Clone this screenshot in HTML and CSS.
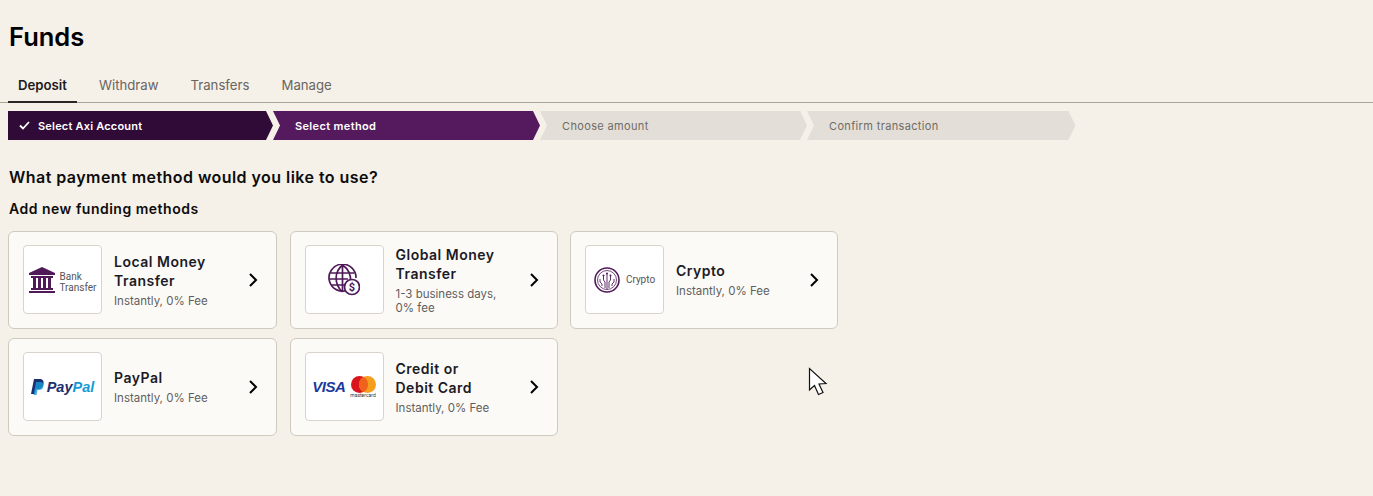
FILE: index.html
```html
<!DOCTYPE html>
<html>
<head>
    <title>Funds</title>
    <link rel="stylesheet" href="styles.css">
</head>
<body>
    <h1 class="page-title">Funds</h1>

    <div class="tabs">
        <div class="tab active">Deposit</div>
        <div class="tab">Withdraw</div>
        <div class="tab">Transfers</div>
        <div class="tab">Manage</div>
    </div>

    <div class="steps">
        <div class="step step-done">
            <svg class="step-check" width="11" height="9" viewBox="0 0 11 9"><path d="M1 4.5 L4 7.500 L10 1" fill="none" stroke="#fff" stroke-width="1.8"/></svg>
            Select Axi Account
        </div>
        <div class="step step-current">Select method</div>
        <div class="step">Choose amount</div>
        <div class="step">Confirm transaction</div>
    </div>

    <h2 class="question">What payment method would you like to use?</h2>
    <h3 class="subheading">Add new funding methods</h3>

    <div class="methods">
        <div class="card">
            <div class="logo">
                <svg width="26" height="26" viewBox="0 0 26 26" fill="#4f1a57">
                    <path d="M13 0 L26 6 L26 8 L0 8 L0 6 Z"/>
                    <rect x="2" y="9" width="22" height="2"/>
                    <rect x="4" y="11" width="3" height="10"/>
                    <rect x="9" y="11" width="3" height="10"/>
                    <rect x="14" y="11" width="3" height="10"/>
                    <rect x="19" y="11" width="3" height="10"/>
                    <rect x="2" y="21" width="22" height="2"/>
                    <rect x="0" y="24" width="26" height="2"/>
                </svg>
                <span class="logo-text logo-text-bank">Bank<br>Transfer</span>
            </div>
            <div class="card-text">
                <div class="card-title">Local Money<br>Transfer</div>
                <div class="card-sub">Instantly, 0% Fee</div>
            </div>
            <svg class="arrow" width="10" height="14" viewBox="0 0 10 14"><path d="M2 1 L8 7 L2 13" fill="none" stroke="#000" stroke-width="2"/></svg>
        </div>

        <div class="card">
            <div class="logo">
                <svg width="32" height="32" viewBox="0 0 32 32" fill="none" stroke="#4f1a57" stroke-width="1.7">
                    <path d="M20 26 A13.500 13.500 0 1 1 28 14"/>
                    <path d="M14.500 1 C6 8 6 20 14.500 28 M14.500 1 C22 6 23 12 22.500 18 M14.500 1 V28"/>
                    <path d="M2.500 9 H26 M1 15 H20 M3 21 H17"/>
                    <circle cx="24" cy="23" r="7.500" fill="#fff"/>
                    <text class="dollar" x="24" y="27" text-anchor="middle">$</text>
                </svg>
            </div>
            <div class="card-text">
                <div class="card-title">Global Money<br>Transfer</div>
                <div class="card-sub">1-3 business days,<br>0% fee</div>
            </div>
            <svg class="arrow" width="10" height="14" viewBox="0 0 10 14"><path d="M2 1 L8 7 L2 13" fill="none" stroke="#000" stroke-width="2"/></svg>
        </div>

        <div class="card">
            <div class="logo">
                <svg width="26" height="26" viewBox="0 0 26 26" fill="none" stroke="#4f1a57">
                    <circle cx="13" cy="13" r="12" stroke-width="1.6"/>
                    <circle cx="13" cy="13" r="9.500" stroke-width="0.8"/>
                    <path d="M13 7 V22 M9.500 9 V13 L11 15 V21 M16.500 9 V13 L15 15 V21 M6 12 V15 L8 17 V19 M20 12 V15 L18 17 V19" stroke-width="0.9"/>
                    <circle cx="13" cy="6.500" r="1" fill="#4f1a57" stroke="none"/>
                    <circle cx="9.500" cy="8.500" r="1" fill="#4f1a57" stroke="none"/>
                    <circle cx="16.500" cy="8.500" r="1" fill="#4f1a57" stroke="none"/>
                </svg>
                <span class="logo-text logo-text-crypto">Crypto</span>
            </div>
            <div class="card-text">
                <div class="card-title">Crypto</div>
                <div class="card-sub">Instantly, 0% Fee</div>
            </div>
            <svg class="arrow" width="10" height="14" viewBox="0 0 10 14"><path d="M2 1 L8 7 L2 13" fill="none" stroke="#000" stroke-width="2"/></svg>
        </div>

        <div class="card">
            <div class="logo">
                <svg width="13" height="16" viewBox="0 0 13 16">
                    <path d="M3 0 H8 C12 0 13 2 12.500 5 C12 8 10 10 7 10 H5 L4 15 H0 Z" fill="#1b2f6e"/>
                    <path d="M5 3 H9 C12 3 13 5 12.500 7 C12 10 10 11 8 11 H6.500 L5.500 16 H2.500 Z" fill="#179bd7" opacity="0.8"/>
                </svg>
                <span class="paypal"><span class="pay">Pay</span><span class="pal">Pal</span></span>
            </div>
            <div class="card-text">
                <div class="card-title">PayPal</div>
                <div class="card-sub">Instantly, 0% Fee</div>
            </div>
            <svg class="arrow" width="10" height="14" viewBox="0 0 10 14"><path d="M2 1 L8 7 L2 13" fill="none" stroke="#000" stroke-width="2"/></svg>
        </div>

        <div class="card">
            <div class="logo">
                <span class="visa">VISA</span>
                <div class="mastercard">
                    <svg width="25" height="17" viewBox="0 0 25 17">
                        <circle cx="8.500" cy="8.500" r="8.500" fill="#d9141c"/>
                        <circle cx="16.500" cy="8.500" r="8.500" fill="#f59e1e"/>
                        <path d="M12.500 1 A8.500 8.500 0 0 1 12.500 16 A8.500 8.500 0 0 1 12.500 1 Z" fill="#f0621b"/>
                    </svg>
                    <span class="mc-text">mastercard</span>
                </div>
            </div>
            <div class="card-text">
                <div class="card-title">Credit or<br>Debit Card</div>
                <div class="card-sub">Instantly, 0% Fee</div>
            </div>
            <svg class="arrow" width="10" height="14" viewBox="0 0 10 14"><path d="M2 1 L8 7 L2 13" fill="none" stroke="#000" stroke-width="2"/></svg>
        </div>
    </div>

    <svg class="cursor" width="20" height="30" viewBox="0 0 20 30">
        <path d="M1.500 1.500 L1.500 23 L6.500 18.500 L10.500 27.500 L15 25.500 L11 17 L18 16.500 Z" fill="#fff" stroke="#111" stroke-width="1.200"/>
    </svg>
</body>
</html>
```

FILE: styles.css
```css
body {
    font-family: Inter, Lato, sans-serif;
    margin: 0;
    padding: 0 0 0 8px;
    background-color: #f5f0e8;
    color: #111;
    overflow: hidden;
}
.page-title {
    font-size: 25.5px;
    font-weight: 600;
    line-height: 32px;
    margin: 21px 0 0 1px;
    color: #000;
}
.tabs {
    display: flex;
    gap: 12px;
    height: 49px;
    border-bottom: 1px solid #a8a398;
    align-items: flex-end;
    margin-left: -8px;
    padding-left: 8px;
}
.tab {
    box-sizing: border-box;
    height: 32px;
    padding: 0 10px;
    line-height: 28px;
    font-size: 13.2px;
    color: #69655f;
    border-bottom: 2px solid transparent;
    margin-bottom: -1px;
}
.tab.active {
    color: #1d1a1c;
    font-weight: 600;
    font-size: 13.2px;
    border-bottom-color: #2b2526;
}
.steps {
    display: flex;
    margin-top: 8px;
}
.step {
    display: flex;
    align-items: center;
    box-sizing: border-box;
    width: 267px;
    height: 29px;
    padding-left: 22px;
    font-size: 11px;
    letter-spacing: 0.35px;
    color: #6f6b66;
    background-color: #e3dfd8;
    clip-path: polygon(0 0, calc(100% - 7px) 0, 100% 50%, calc(100% - 7px) 100%, 0 100%, 7px 50%);
}
.step:last-child {
    width: 268.5px;
}
.step-done {
    width: 265px;
    padding-left: 11px;
    color: #fff;
    font-weight: 600;
    letter-spacing: 0.2px;
    background-color: #300b38;
    clip-path: polygon(0 0, calc(100% - 7px) 0, 100% 50%, calc(100% - 7px) 100%, 0 100%);
}
.step-current {
    color: #fff;
    font-weight: 600;
    background-color: #551a5e;
}
.step-check {
    margin-right: 8px;
}
.question {
    font-size: 16px;
    font-weight: 600;
    line-height: 22px;
    letter-spacing: 0.45px;
    margin: 26px 0 0 1px;
    color: #0c0c0c;
}
.subheading {
    font-size: 14px;
    font-weight: 600;
    line-height: 20px;
    letter-spacing: 0.5px;
    margin: 11px 0 0 1px;
    color: #0c0c0c;
}
.methods {
    display: grid;
    grid-template-columns: 269px 268px 268px;
    grid-auto-rows: 97.5px;
    column-gap: 12.5px;
    row-gap: 9.5px;
    margin-top: 12px;
}
.card {
    display: flex;
    align-items: center;
    box-sizing: border-box;
    padding: 0 14px;
    background-color: #fcfaf6;
    border: 1px solid #cfcabf;
    border-radius: 6px;
}
.logo {
    display: flex;
    align-items: center;
    justify-content: center;
    gap: 5px;
    flex: none;
    box-sizing: border-box;
    width: 79px;
    height: 69px;
    background-color: #fff;
    border: 1px solid #d8d4cc;
    border-radius: 4px;
}
.logo-text {
    font-family: Roboto, sans-serif;
    font-size: 10px;
    line-height: 11px;
    color: #555;
}
.logo-text-bank {
    margin-top: 4px;
}
.logo-text-crypto {
    margin-left: 1px;
}
.dollar {
    font-family: Roboto, sans-serif;
    font-size: 11px;
    font-weight: 700;
    fill: #4f1a57;
    stroke: none;
}
.paypal {
    font-family: "Liberation Sans", sans-serif;
    font-size: 14.5px;
    font-weight: 700;
    font-style: italic;
    margin-left: -2px;
}
.pay {
    color: #1b2f6e;
}
.pal {
    color: #179bd7;
}
.visa {
    font-family: "Liberation Sans", sans-serif;
    font-size: 15px;
    font-weight: 700;
    font-style: italic;
    color: #1a3a9c;
    letter-spacing: -0.5px;
}
.mastercard {
    display: flex;
    flex-direction: column;
    align-items: center;
}
.mc-text {
    font-family: Roboto, sans-serif;
    font-size: 5px;
    line-height: 5px;
    color: #333;
}
.card-text {
    flex: 1;
    margin-left: 12px;
    min-width: 0;
}
.card-title {
    font-size: 14px;
    font-weight: 600;
    line-height: 19px;
    letter-spacing: 0.5px;
    color: #1b1b26;
}
.card-sub {
    font-size: 11.5px;
    line-height: 14px;
    margin-top: 4px;
    color: #5f5f5f;
}
.arrow {
    flex: none;
    margin-right: 4px;
}
.cursor {
    position: absolute;
    left: 808px;
    top: 367px;
}
```
